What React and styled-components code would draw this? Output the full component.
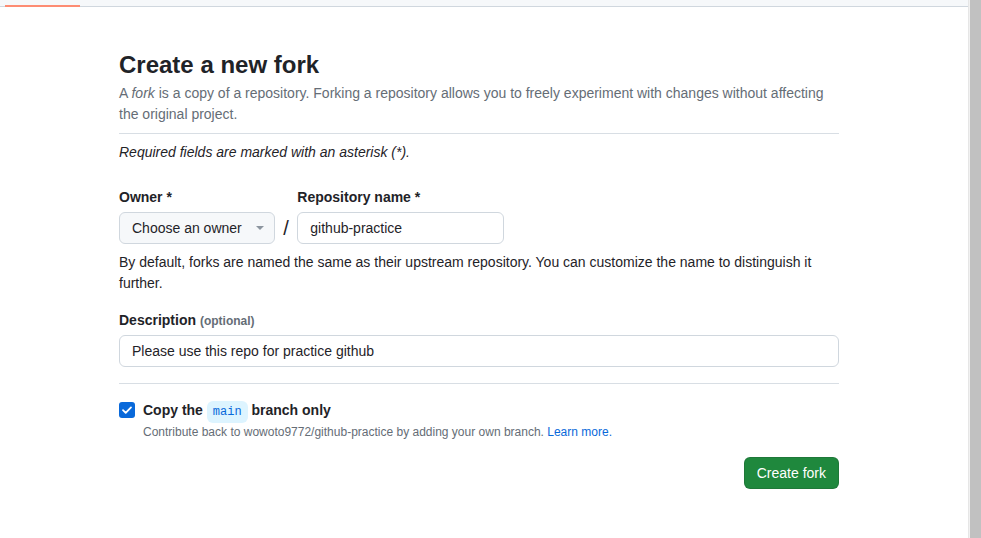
import React from "react";
import styled, { createGlobalStyle } from "styled-components";

const GlobalStyle = createGlobalStyle`
  html, body { margin: 0; padding: 0; background: #ffffff; }
  body {
    font-family: "Liberation Sans", Arial, sans-serif;
    font-size: 14px;
    line-height: 1.5;
    color: #1f2328;
  }
  * { box-sizing: border-box; }
`;

const Frame = styled.div`
  display: flex;
  width: 981px;
  height: 538px;
  overflow: hidden;
`;

const Main = styled.div`
  flex: 1;
  display: flex;
  flex-direction: column;
  min-width: 0;
`;

const TopStrip = styled.div`
  height: 7px;
  background: #f6f8fa;
  border-bottom: 1px solid #d0d7de;
  display: flex;
  align-items: flex-end;
  padding-left: 5px;
`;

const TabUnderline = styled.div`
  width: 75px;
  height: 2px;
  margin-bottom: -1px;
  background: #fd8c73;
`;

const Scrollbar = styled.div`
  width: 13px;
  background: #f1f1f1;
  border-left: 1px solid #e6e6e6;
  display: flex;
  padding-left: 1px;
`;

const Thumb = styled.div`
  flex: 1;
  background: #c1c1c1;
`;

const Content = styled.div`
  padding: 40px 10px 0 0;
`;

const Container = styled.div`
  width: 720px;
  margin: 0 auto;
`;

const Title = styled.h1`
  margin: 0;
  font-size: 24px;
  line-height: 36px;
  font-weight: 700;
  color: #1f2328;
`;

const Lead = styled.p`
  margin: 0;
  font-size: 14px;
  line-height: 21px;
  color: #656d76;
`;

const Divider = styled.hr`
  border: 0;
  border-top: 1px solid #d8dee4;
  margin: ${(p) => p.$m || "8px 0"};
  height: 0;
`;

const Note = styled.p`
  margin: 0;
  font-style: italic;
  line-height: 21px;
`;

const FieldRow = styled.div`
  display: flex;
  align-items: flex-end;
  margin-top: 24px;
`;

const Field = styled.div`
  display: flex;
  flex-direction: column;
  gap: 4px;
`;

const Label = styled.label`
  font-weight: 700;
  font-size: 14px;
  line-height: 21px;
  height: 21px;
`;

const Optional = styled.span`
  font-size: 12px;
  font-weight: 700;
  line-height: 1;
  color: #656d76;
`;

const SelectButton = styled.button`
  display: flex;
  align-items: center;
  height: 32px;
  padding: 0 10px 0 12px;
  background: #f6f8fa;
  border: 1px solid #d0d7de;
  border-radius: 6px;
  font-family: inherit;
  font-size: 14px;
  color: #1f2328;
  cursor: pointer;
`;

const Caret = styled.span`
  display: inline-block;
  width: 0;
  height: 0;
  margin-left: 14px;
  border-style: solid;
  border-width: 4px 4px 0;
  border-color: #8c959f transparent transparent;
`;

const Slash = styled.span`
  font-size: 20px;
  line-height: 32px;
  height: 32px;
  margin: 0 8.5px;
  color: #1f2328;
`;

const TextInput = styled.input`
  height: 32px;
  width: ${(p) => p.$w || "100%"};
  padding: 0 12px;
  border: 1px solid #d0d7de;
  border-radius: 6px;
  background: #ffffff;
  font-family: inherit;
  font-size: 14px;
  color: #1f2328;
  outline: none;
`;

const Hint = styled.p`
  margin: 8px 0 0;
  font-size: 14px;
  line-height: 21px;
  color: #1f2328;
`;

const Block = styled.div`
  margin-top: ${(p) => p.$mt || "0"};
  display: flex;
  flex-direction: column;
  gap: 4px;
`;

const CheckRow = styled.div`
  display: flex;
  gap: 8px;
  align-items: flex-start;
`;

const CheckBox = styled.span`
  flex: none;
  width: 16px;
  height: 16px;
  margin-top: 2px;
  border-radius: 3px;
  background: #0969da;
  display: flex;
  align-items: center;
  justify-content: center;
`;

const CheckText = styled.div`
  display: flex;
  flex-direction: column;
`;

const CheckLabel = styled.div`
  font-weight: 700;
  font-size: 14px;
  line-height: 21px;
`;

const BranchName = styled.span`
  display: inline-block;
  padding: 2px 6px;
  font-family: "Liberation Mono", "DejaVu Sans Mono", monospace;
  font-size: 12px;
  font-weight: 400;
  line-height: 18px;
  color: #0969da;
  background: #ddf4ff;
  border-radius: 6px;
`;

const SmallNote = styled.p`
  margin: 0;
  font-size: 12px;
  line-height: 18px;
  color: #656d76;
`;

const Link = styled.a`
  color: #0969da;
  text-decoration: none;
`;

const Actions = styled.div`
  display: flex;
  justify-content: flex-end;
  margin-top: 16px;
`;

const PrimaryButton = styled.button`
  height: 32px;
  padding: 0 12px;
  border: 1px solid rgba(31, 35, 40, 0.15);
  border-radius: 6px;
  background: #1f883d;
  color: #ffffff;
  font-family: inherit;
  font-size: 14px;
  cursor: pointer;
`;

export default function App() {
  return (
    <>
      <GlobalStyle />
      <Frame>
        <Main>
          <TopStrip>
            <TabUnderline />
          </TopStrip>
          <Content>
            <Container>
              <Title>Create a new fork</Title>
              <Lead>
                A <em>fork</em> is a copy of a repository. Forking a repository allows you to freely
                experiment with changes without affecting the original project.
              </Lead>
              <Divider />
              <Note>Required fields are marked with an asterisk (*).</Note>

              <FieldRow>
                <Field>
                  <Label>Owner *</Label>
                  <SelectButton type="button">
                    Choose an owner
                    <Caret />
                  </SelectButton>
                </Field>
                <Slash>/</Slash>
                <Field>
                  <Label>Repository name *</Label>
                  <TextInput $w="207px" defaultValue="github-practice" readOnly />
                </Field>
              </FieldRow>
              <Hint>
                By default, forks are named the same as their upstream repository. You can customize
                the name to distinguish it further.
              </Hint>

              <Block $mt="16px">
                <Label>
                  Description <Optional>(optional)</Optional>
                </Label>
                <TextInput defaultValue="Please use this repo for practice github" readOnly />
              </Block>

              <Divider $m="16px 0" />

              <CheckRow>
                <CheckBox role="checkbox" aria-checked="true">
                  <svg width="12" height="12" viewBox="0 0 12 12" fill="none">
                    <path
                      d="M2 6.2 L4.7 8.9 L10 3.4"
                      stroke="#ffffff"
                      strokeWidth="1.8"
                      strokeLinecap="round"
                      strokeLinejoin="round"
                    />
                  </svg>
                </CheckBox>
                <CheckText>
                  <CheckLabel>
                    Copy the <BranchName>main</BranchName> branch only
                  </CheckLabel>
                  <SmallNote>
                    Contribute back to wowoto9772/github-practice by adding your own branch.{" "}
                    <Link href="#">Learn more.</Link>
                  </SmallNote>
                </CheckText>
              </CheckRow>

              <Actions>
                <PrimaryButton type="button">Create fork</PrimaryButton>
              </Actions>
            </Container>
          </Content>
        </Main>
        <Scrollbar>
          <Thumb />
        </Scrollbar>
      </Frame>
    </>
  );
}
